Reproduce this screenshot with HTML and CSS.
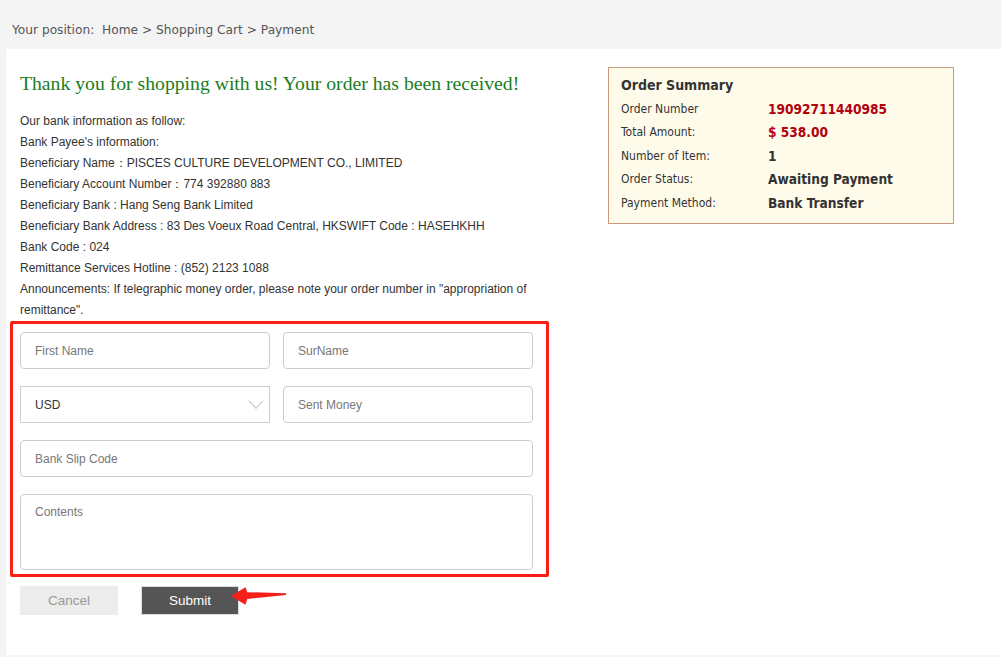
FILE: index.html
```html
<!DOCTYPE html>
<html lang="en">
<head>
  <meta charset="UTF-8">
  <meta name="viewport" content="width=device-width, initial-scale=1.0">
  <title>Payment</title>
  <link rel="stylesheet" href="styles.css">
</head>
<body>
  <div class="crumb">Your position:&nbsp; <a href="#">Home</a> &gt; <a href="#">Shopping Cart</a> &gt; Payment</div>

  <div class="main">
    <div class="left">
      <h1>Thank you for shopping with us! Your order has been received!</h1>

      <div class="bank-info">
        <p>Our bank information as follow:</p>
        <p>Bank Payee's information:</p>
        <p>Beneficiary Name：PISCES CULTURE DEVELOPMENT CO., LIMITED</p>
        <p>Beneficiary Account Number：774 392880 883</p>
        <p>Beneficiary Bank : Hang Seng Bank Limited</p>
        <p>Beneficiary Bank Address : 83 Des Voeux Road Central, HKSWIFT Code : HASEHKHH</p>
        <p>Bank Code : 024</p>
        <p>Remittance Services Hotline : (852) 2123 1088</p>
        <p>Announcements: If telegraphic money order, please note your order number in "appropriation of remittance".</p>
      </div>

      <form class="pay-form">
        <div class="row two">
          <input type="text" placeholder="First Name">
          <input type="text" placeholder="SurName">
        </div>
        <div class="row two">
          <div class="select-wrap">
            <select>
              <option>USD</option>
              <option>EUR</option>
              <option>HKD</option>
            </select>
            <svg class="chevron" width="16" height="10" viewBox="0 0 16 10"><path d="M1 1 L8 8 L15 1" fill="none" stroke="#d4d6db" stroke-width="1.6"/></svg>
          </div>
          <input type="text" placeholder="Sent Money">
        </div>
        <div class="row">
          <input type="text" placeholder="Bank Slip Code">
        </div>
        <div class="row">
          <textarea placeholder="Contents"></textarea>
        </div>
      </form>

      <div class="buttons">
        <button type="button" class="cancel-btn">Cancel</button>
        <button type="button" class="submit-btn">Submit</button>
        <svg class="arrow" width="60" height="24" viewBox="228 585 62 24">
          <polygon points="231,596 246,587 248,592 288,593 288,595 248,599 246,605" fill="#f5201a"/>
        </svg>
      </div>
    </div>

    <div class="summary">
      <h2>Order Summary</h2>
      <table>
        <tr><td class="label">Order Number</td><td class="value red">19092711440985</td></tr>
        <tr><td class="label">Total Amount:</td><td class="value red">$ 538.00</td></tr>
        <tr><td class="label">Number of Item:</td><td class="value">1</td></tr>
        <tr><td class="label">Order Status:</td><td class="value">Awaiting Payment</td></tr>
        <tr><td class="label">Payment Method:</td><td class="value">Bank Transfer</td></tr>
      </table>
    </div>
  </div>
</body>
</html>
```

FILE: styles.css
```css
body {
  margin: 0;
  background-color: #f4f4f4;
  font-family: 'Liberation Sans', Arial, sans-serif;
  color: #333;
}

.crumb {
  height: 49px;
  box-sizing: border-box;
  padding: 21px 12px 0;
  line-height: 18px;
  font-family: 'DejaVu Sans', sans-serif;
  font-size: 12.2px;
  color: #555;
}

.crumb a {
  color: #555;
  text-decoration: none;
}

.main {
  display: flex;
  margin-left: 6px;
  height: 606px;
  padding: 0 14px;
  background-color: #fff;
}

.left {
  width: 530px;
  padding-top: 20px;
}

h1 {
  margin: 0;
  font-family: 'Liberation Serif', 'Times New Roman', serif;
  font-weight: normal;
  font-size: 19.7px;
  line-height: 28px;
  white-space: nowrap;
  color: #1b7d1b;
}

.bank-info {
  margin-top: 14px;
  font-size: 12px;
  line-height: 21px;
}

.bank-info p {
  margin: 0;
}

.pay-form {
  margin: 0 0 0 -10px;
  width: 539px;
  box-sizing: border-box;
  padding: 8px 13px 4px 7px;
  border: 3px solid #f91e14;
  border-radius: 2px;
  display: flex;
  flex-direction: column;
  gap: 17px;
}

.row {
  display: grid;
  grid-template-columns: 1fr;
}

.row.two {
  grid-template-columns: 1fr 1fr;
  column-gap: 13px;
}

input,
select,
textarea {
  box-sizing: border-box;
  width: 100%;
  height: 37px;
  padding: 0 14px;
  border: 1px solid #c9ced6;
  border-radius: 4px;
  background-color: #fff;
  font-family: 'Liberation Sans', Arial, sans-serif;
  font-size: 12px;
  color: #333;
  outline: none;
}

input::placeholder,
textarea::placeholder {
  color: #777;
}

.select-wrap {
  position: relative;
}

select {
  border-radius: 0;
  appearance: none;
  -webkit-appearance: none;
}

.chevron {
  position: absolute;
  right: 6px;
  top: 14px;
}

textarea {
  height: 76px;
  padding-top: 10px;
  resize: none;
}

.buttons {
  position: relative;
  display: flex;
  gap: 23px;
  margin-top: 9px;
}

button {
  width: 98px;
  height: 29px;
  border: 1px solid #e4e4e4;
  font-family: 'Liberation Sans', Arial, sans-serif;
  font-size: 13.5px;
  cursor: pointer;
}

.cancel-btn {
  background-color: #ececec;
  border-color: #ececec;
  color: #999;
}

.submit-btn {
  background-color: #555;
  border-color: #ddd;
  color: #fff;
}

.arrow {
  position: absolute;
  left: 208px;
  top: -1px;
}

.summary {
  align-self: flex-start;
  margin: 18px 0 0 58px;
  width: 346px;
  box-sizing: border-box;
  padding: 6px 12px 8px;
  border: 1px solid #c99a7b;
  background-color: #fffbea;
  font-family: 'DejaVu Sans Condensed', 'DejaVu Sans', sans-serif;
  color: #333;
}

.summary h2 {
  margin: 0;
  font-size: 14px;
  line-height: 23px;
}

.summary table {
  border-collapse: collapse;
}

.summary td {
  padding: 0;
  height: 23.5px;
  vertical-align: middle;
}

.label {
  width: 147px;
  font-size: 12px;
}

.value {
  font-size: 13.6px;
  font-weight: bold;
  padding-top: 2px;
}

.value.red {
  color: #b3000d;
}
```
